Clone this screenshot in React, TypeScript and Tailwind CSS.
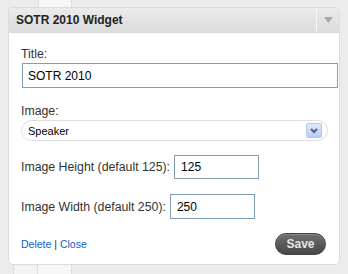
export default function App() {
  return (
    <div className="w-[348px] h-[274px] overflow-hidden bg-[#ececec] font-['Liberation_Sans',Arial,sans-serif] text-[#333]">
      <div className="h-[7px] flex">
        <div className="ml-[38px] w-[34px] bg-[#f6f6f6] border-x border-[#dedede]" />
      </div>
      <div className="ml-[8px] w-[332px] h-[258px] flex flex-col rounded-[5px] rounded-tl-[3px] border border-[#dcdcdc] bg-white overflow-hidden">
        <div className="h-[25px] flex bg-gradient-to-b from-[#ebebeb] to-[#dcdcdc] border-b border-[#d8d8d8]">
          <div className="flex-1 pl-[7px] text-[12px] font-bold text-[#222] leading-[25px]">SOTR 2010 Widget</div>
          <div className="w-[1px] bg-[#f7f7f7]" />
          <div className="w-[22px] flex items-center justify-center">
            <svg width="9" height="6" viewBox="0 0 9 6">
              <path d="M0 0h9L4.5 6z" fill="#aaaaaa" />
            </svg>
          </div>
        </div>
        <div className="flex-1 flex flex-col pl-[12px] pr-[1px] text-[12.3px] leading-[14px] text-[#333]">
          <div className="mt-[14px]">Title:</div>
          <div className="mt-[2px] ml-[1px] h-[25px] border border-[#7f9db9] flex items-center pl-[5px] text-[12px] text-black">
            SOTR 2010
          </div>
          <div className="mt-[16px]">Image:</div>
          <div className="mt-[2px] w-[307px] h-[21px] rounded-full border border-[#dddddd] flex items-center pl-[6px] pr-[5px] text-[11px] text-black">
            <span className="flex-1">Speaker</span>
            <div className="w-[16px] h-[15px] rounded-[2px] bg-gradient-to-b from-[#e1e9fc] to-[#b9cbf6] border border-[#b4c6ee] flex items-center justify-center">
              <svg width="8" height="6" viewBox="0 0 8 6">
                <path d="M1 1l3 3 3-3" stroke="#4d6185" strokeWidth="2" fill="none" />
              </svg>
            </div>
          </div>
          <div className="mt-[14px] flex items-center gap-[4px]">
            <span>Image Height (default 125):</span>
            <div className="w-[85px] h-[24px] border border-[#7f9db9] flex items-center pl-[6px] text-[12px] text-black">125</div>
          </div>
          <div className="mt-[15px] flex items-center gap-[4px]">
            <span>Image Width (default 250):</span>
            <div className="w-[85px] h-[25px] border border-[#7f9db9] flex items-center pl-[6px] text-[12px] text-black">250</div>
          </div>
          <div className="mt-[14px] flex items-center pr-[12px]">
            <div className="flex-1 text-[10.5px] text-[#333]">
              <a className="text-[#0a5fc9]">Delete</a> | <a className="text-[#0a5fc9]">Close</a>
            </div>
            <button className="w-[51px] h-[22px] rounded-full bg-gradient-to-b from-[#707070] to-[#474747] border border-[#3f3f3f] text-[12px] font-bold text-[#e6e6e6] shadow-[inset_0_1px_0_#8a8a8a]">
              Save
            </button>
          </div>
        </div>
      </div>
      <div className="flex h-[9px]">
        <div className="ml-[13px] w-[25px] bg-[#f3f3f3] border-x border-[#dedede]" />
        <div className="w-[34px] bg-[#f6f6f6] border-r border-[#dedede]" />
      </div>
    </div>
  );
}
